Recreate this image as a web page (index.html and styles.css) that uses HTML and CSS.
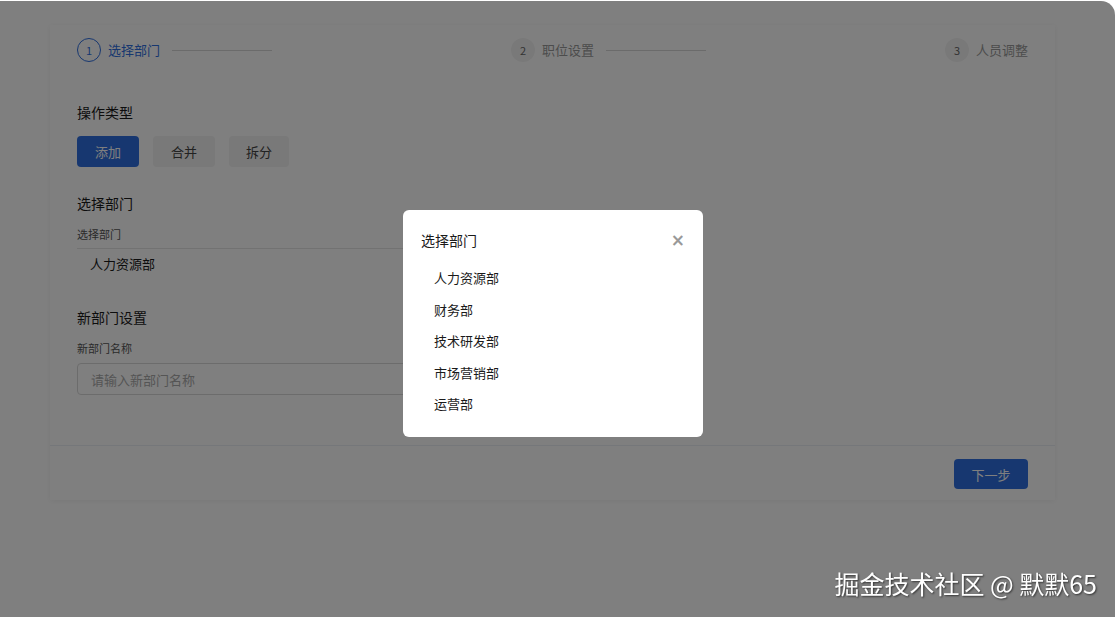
FILE: index.html
```html
<!DOCTYPE html>
<html lang="zh-CN">
<head>
    <meta charset="UTF-8">
    <title>部门调整</title>
    <link rel="stylesheet" href="styles.css">
</head>
<body>
    <div class="page">
        <div class="card">
            <div class="card-body">
                <div class="steps">
                    <div class="step active">
                        <span class="step-num">1</span>
                        <span class="step-title">选择部门</span>
                        <span class="step-line"></span>
                    </div>
                    <div class="step">
                        <span class="step-num">2</span>
                        <span class="step-title">职位设置</span>
                        <span class="step-line"></span>
                    </div>
                    <div class="step">
                        <span class="step-num">3</span>
                        <span class="step-title">人员调整</span>
                    </div>
                </div>

                <div class="section op-section">
                    <div class="section-title">操作类型</div>
                    <div class="op-buttons">
                        <button class="btn btn-primary">添加</button>
                        <button class="btn btn-gray">合并</button>
                        <button class="btn btn-gray narrow">拆分</button>
                    </div>
                </div>

                <div class="section">
                    <div class="section-title">选择部门</div>
                    <label class="field-label">选择部门</label>
                    <div class="select-box">人力资源部</div>
                </div>

                <div class="section">
                    <div class="section-title">新部门设置</div>
                    <label class="field-label">新部门名称</label>
                    <input type="text" class="text-input" placeholder="请输入新部门名称">
                </div>
            </div>
            <div class="card-footer">
                <button class="btn btn-primary btn-next">下一步</button>
            </div>
        </div>
    </div>

    <!-- 遮罩 + 弹窗 -->
    <div class="mask"></div>
    <div class="modal">
        <div class="modal-header">
            <span>选择部门</span>
            <span class="modal-close">&times;</span>
        </div>
        <ul class="dept-list">
            <li>人力资源部</li>
            <li>财务部</li>
            <li>技术研发部</li>
            <li>市场营销部</li>
            <li>运营部</li>
        </ul>
    </div>

    <div class="watermark">掘金技术社区 @ 默默65</div>
</body>
</html>
```

FILE: styles.css
```css
:root {
    --primary: #2f6fe0;
    --text: #333;
    --border: #d9d9d9;
}

html {
    background: #ececec;
}

body {
    margin: 0;
    font-family: "Noto Sans CJK SC", "Noto Sans", sans-serif;
    color: var(--text);
    font-size: 13px;
    background: #fff;
    height: 617px;
    overflow: hidden;
}

.page {
    padding: 25px 60px 0 50px;
}

.card {
    background: #fff;
    box-shadow: 0 1px 6px rgba(0,0,0,0.06);
}

.card-body {
    padding: 13px 27px 50px;
    border-bottom: 1px solid #ebeef5;
}

/* 步骤条 */
.steps {
    display: flex;
    justify-content: space-between;
    align-items: center;
    height: 24px;
}

.step {
    display: flex;
    align-items: center;
    color: #999;
}

.step-num {
    width: 24px;
    height: 24px;
    border-radius: 50%;
    background: #f3f3f3;
    display: flex;
    align-items: center;
    justify-content: center;
    font-size: 11px;
    color: #666;
    box-sizing: border-box;
}

.step-title {
    margin-left: 7px;
    font-size: 13px;
    line-height: 20px;
}

.step-line {
    width: 100px;
    height: 1px;
    background: #d6d6d6;
    margin-left: 12px;
}

.step.active {
    color: var(--primary);
}

.step.active .step-num {
    background: transparent;
    border: 1.5px solid var(--primary);
    color: var(--primary);
}

/* 表单区 */
.section {
    margin-top: 26px;
}

.op-section {
    margin-top: 40px;
}

.section-title {
    font-size: 14px;
    line-height: 20px;
    color: #1a1a1a;
}

.op-buttons {
    display: flex;
    gap: 14px;
    margin-top: 14px;
}

.btn {
    border: none;
    border-radius: 4px;
    font-family: inherit;
    font-size: 13px;
    height: 31px;
    width: 62px;
    cursor: pointer;
}

.btn.narrow {
    width: 60px;
}

.btn-primary {
    background: var(--primary);
    color: #fff;
}

.btn-gray {
    background: #f2f2f2;
    color: #444;
}

.field-label {
    display: block;
    margin-top: 12px;
    font-size: 11px;
    line-height: 18px;
    color: #555;
}

.select-box,
.text-input {
    max-width: 440px;
}

.select-box {
    margin-top: 5px;
    height: 33px;
    line-height: 29px;
    padding-left: 13px;
    border-top: 1px solid #e4e4e4;
    box-sizing: border-box;
    color: #1a1a1a;
}

.text-input {
    display: block;
    margin-top: 6px;
    width: 100%;
    height: 32px;
    box-sizing: border-box;
    border: 1px solid var(--border);
    border-radius: 4px;
    padding: 0 13px;
    font-family: inherit;
    font-size: 13px;
}

.text-input::placeholder {
    color: #aaa;
}

.card-footer {
    display: flex;
    justify-content: flex-end;
    padding: 13px 27px 11px;
}

.btn-next {
    width: 74px;
    height: 30px;
}

/* 遮罩 */
.mask {
    position: fixed;
    top: 1px;
    left: 0;
    right: 0;
    bottom: 0;
    background: rgba(0,0,0,0.5);
    border-top-right-radius: 14px;
}

.modal {
    position: fixed;
    left: 403px;
    top: 210px;
    width: 300px;
    box-sizing: border-box;
    background: #fff;
    border-radius: 6px;
    padding: 20px 18px 17px;
}

.modal-header {
    display: flex;
    justify-content: space-between;
    align-items: center;
    line-height: 20px;
    font-size: 14px;
    color: #1a1a1a;
}

.modal-close {
    font-size: 17px;
    font-weight: bold;
    color: #999;
    font-family: "DejaVu Sans", sans-serif;
}

.dept-list {
    list-style: none;
    margin: 12px 0 0;
    padding: 0 0 0 13px;
}

.dept-list li {
    line-height: 31.5px;
    color: #1a1a1a;
}

.watermark {
    position: fixed;
    right: 18px;
    bottom: 16px;
    font-size: 25px;
    color: #fff;
    text-shadow: 1px 1px 2px rgba(0,0,0,0.6);
}
```
